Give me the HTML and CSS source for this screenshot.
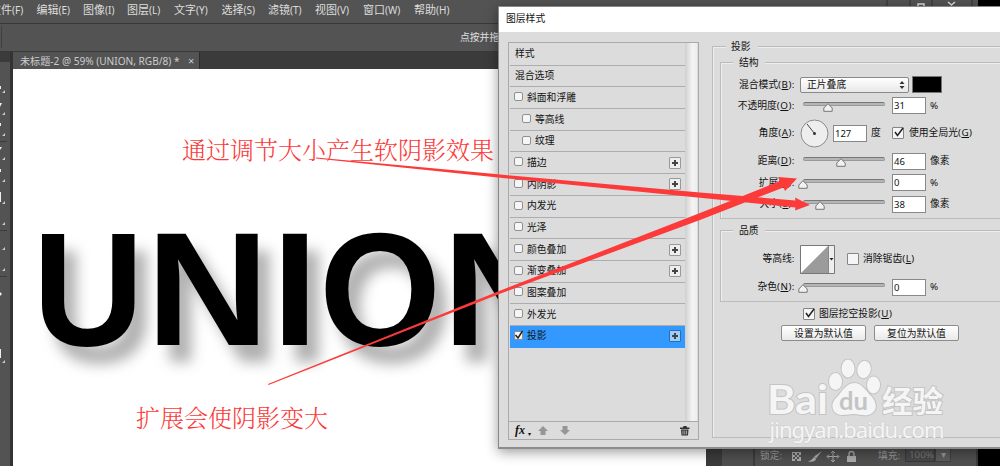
FILE: index.html
```html
<!DOCTYPE html>
<html lang="zh-CN">
<head>
<meta charset="utf-8">
<title>图层样式</title>
<link rel="stylesheet" href="styles.css">
</head>
<body>
<div class="app">
  <nav class="menubar">
    <span class="m0">文件<i>(F)</i></span><span class="m1">编辑<i>(E)</i></span><span class="m2">图像<i>(I)</i></span><span class="m3">图层<i>(L)</i></span><span class="m4">文字<i>(Y)</i></span><span class="m5">选择<i>(S)</i></span><span class="m6">滤镜<i>(T)</i></span><span class="m7">视图<i>(V)</i></span><span class="m8">窗口<i>(W)</i></span><span class="m9">帮助<i>(H)</i></span>
    <svg class="winbtns" width="115" height="23" viewBox="885 0 115 23"><path d="M887 0V7M910 0V7M932 0V7M972 0V7" stroke="#333"/><path d="M918 7V4H924V7M948 2L955 8M955 2L948 8" fill="none" stroke="#ddd" stroke-width="1.5"/><path d="M978 0H1000V7H978Z" fill="#000"/></svg>
  </nav>
  <div class="options"><span>点按并拖</span></div>
  <div class="work">
    <aside class="tools">
      <svg width="10" height="414" viewBox="0 52 10 414">
        <path d="M0 52H10V62H0Z" fill="#3b3b3b"/>
        <path d="M0 141.500H7M0 230.500H7M0 276.500H7" stroke="#3b3b3b"/>
        <path d="M5 93l-3 0 3-3zM5 115l-3 0 3-3zM5 136l-3 0 3-3zM5 160l-3 0 3-3zM5 182l-3 0 3-3zM5 204l-3 0 3-3zM5 225l-3 0 3-3zM5 250l-3 0 3-3zM5 271l-3 0 3-3zM5 363l-3 0 3-3z" fill="#ccc"/>
        <path d="M0 86h1v3H0zM0 103h2l-2 4zM0 123h1v3H0zM0 147h2l-2 3zM0 169h1v3H0zM0 192h1v10H0zM0 292l2 2-2 2zM0 349h1v9H0z" fill="#eee"/>
      </svg>
    </aside>
    <main class="doc">
      <div class="tabs"><div class="tab"><span>未标题-2 @ 59% (UNION, RGB/8) *</span><b>×</b></div></div>
      <div class="canvas">
        <svg width="693" height="397" viewBox="13 69 693 397">
          <g class="union">
            <text transform="translate(32.700 345) scale(.950 1)">U</text>
            <text transform="translate(146.300 345) scale(1.050 1)">N</text>
            <text transform="translate(272 345) scale(1.020 1)">I</text>
            <text transform="translate(319.300 345) scale(.965 1)">O</text>
            <text transform="translate(442.500 345) scale(1.050 1)">N</text>
          </g>
        </svg>
      </div>
    </main>
    <aside class="dock">
      <div class="strip"></div><div class="icons"></div>
      <div class="layers">
        <span>锁定:</span>
        <svg width="66" height="12" viewBox="791 449 66 12"><path d="M792 451h9v9h-9z" fill="#aaa"/><path d="M793 452h2v2h-2zM797 452h2v2h-2zM795 454h2v2h-2zM799 454h2v2h-2zM793 456h2v2h-2zM797 456h2v2h-2zM795 458h2v2h-2z" fill="#555"/><path d="M822 450l-8 5.500 2 2zM814 456q-2 3.500-6 4.500 7 1 8-2.500z" fill="#aaa"/><path d="M833 450v11M827.500 455.500h11M831 452l2-2 2 2M831 459l2 2 2-2M829 453.500l-2 2 2 2M837 453.500l2 2-2 2" fill="none" stroke="#aaa"/><path d="M847 455h9v6h-9z" fill="#aaa"/><path d="M849 455v-2a2.500 2.500 0 0 1 5 0v2" fill="none" stroke="#aaa" stroke-width="1.300"/></svg>
        <span class="fill">填充:</span><span class="pct">100%</span><span class="drop">▾</span>
      </div>
      <div class="edge"></div>
    </aside>
  </div>

  <section class="dialog">
    <header>图层样式</header>
    <div class="body">
      <div class="panel">
        <div class="rows">
          <ul class="list">
            <li>样式</li>
            <li>混合选项</li>
            <li><i class="cb"></i>斜面和浮雕</li>
            <li class="sub"><i class="cb"></i>等高线</li>
            <li class="sub"><i class="cb"></i>纹理</li>
            <li><i class="cb"></i>描边<em></em></li>
            <li><i class="cb"></i>内阴影<em></em></li>
            <li><i class="cb"></i>内发光</li>
            <li><i class="cb"></i>光泽</li>
            <li><i class="cb"></i>颜色叠加<em></em></li>
            <li><i class="cb"></i>渐变叠加<em></em></li>
            <li><i class="cb"></i>图案叠加</li>
            <li><i class="cb"></i>外发光</li>
            <li class="on"><i class="cb"><svg viewBox="0 0 9 9"><path d="M1.500 4L4 7 8.500 0"/></svg></i>投影<em></em></li>
          </ul>
          <div class="scroll"></div>
        </div>
        <footer>
          <span class="fx">fx</span><span class="dot">▾</span>
          <svg width="34" height="10" viewBox="0 0 34 10"><path d="M5 0L10 5H7.500V9H2.500V5H0ZM24.500 0H29.500V4H32L27 9 22 4H24.500Z" fill="#969696"/></svg>
          <svg class="trash" width="10" height="10" viewBox="0 0 10 10"><path d="M0 1.500H3L3.500 0H6.500L7 1.500H9.500V3H0ZM1 3.500H8.500L8 9.500H1.500Z" fill="#333"/><path d="M3 4.500V8.500M4.800 4.500V8.500M6.600 4.500V8.500" stroke="#ddd" stroke-width=".7"/></svg>
        </footer>
      </div>

      <div class="settings">
        <h2>投影</h2>
        <div class="group structure">
          <h3>结构</h3>
          <div class="row r1"><label>混合模式<s>(<u>B</u>):</s></label><div class="select"><span>正片叠底</span><svg width="6" height="8" viewBox="0 0 6 8"><path d="M3 0L5.500 3H.5ZM3 8L.5 5H5.500Z" fill="#333"/></svg></div><div class="swatch"></div></div>
          <div class="row r2"><label>不透明度<s>(<u>O</u>):</s></label><div class="slider"><svg style="margin-left:19px" viewBox="0 0 10 9"><path d="M5 .7L9.200 5V8.300H.8V5Z"/></svg></div><div class="field">31</div><span>%</span></div>
          <div class="row r3"><label>角度<s>(<u>A</u>):</s></label><svg class="dial" width="29" height="29" viewBox="0 0 29 29"><circle cx="14.500" cy="14.500" r="13.500" fill="#eee" stroke="#8b8b8b"/><path d="M7 5L14.500 14.500" stroke="#444"/><circle cx="14.500" cy="14.500" r="1.500" fill="#333"/></svg><div class="field angle">127</div><span class="deg">度</span><i class="check"><svg viewBox="0 0 11 11"><path d="M2 5L4.500 8.500 10 1"/></svg></i><span class="global">使用全局光<s>(<u>G</u>)</s></span></div>
          <div class="row r4"><label>距离<s>(<u>D</u>):</s></label><div class="slider"><svg style="margin-left:32px" viewBox="0 0 10 9"><path d="M5 .7L9.200 5V8.300H.8V5Z"/></svg></div><div class="field">46</div><span>像素</span></div>
          <div class="row r5"><label>扩展<s>(<u>R</u>):</s></label><div class="slider"><svg style="margin-left:-6px" viewBox="0 0 10 9"><path d="M5 .7L9.200 5V8.300H.8V5Z"/></svg></div><div class="field">0</div><span>%</span></div>
          <div class="row r6"><label>大小<s>(<u>S</u>):</s></label><div class="slider"><svg style="margin-left:11px" viewBox="0 0 10 9"><path d="M5 .7L9.200 5V8.300H.8V5Z"/></svg></div><div class="field">38</div><span>像素</span></div>
        </div>
        <div class="group quality">
          <h3>品质</h3>
          <div class="row q1"><label>等高线<s>:</s></label><svg class="contour" width="35" height="29" viewBox="0 0 35 29"><path d="M.5.500H34.500V28.500H.5Z" fill="#fff" stroke="#777"/><path d="M1 28L28 1V28Z" fill="#9b9b9b"/><path d="M28.500 1V28" stroke="#888"/><path d="M29 1H34V28H29Z" fill="#eee"/><path d="M29.500 13H33.500L31.500 15.500Z" fill="#222"/></svg><i class="check off"></i><span class="aa">消除锯齿<s>(<u>L</u>)</s></span></div>
          <div class="row q2"><label>杂色<s>(<u>N</u>):</s></label><div class="slider"><svg style="margin-left:-6px" viewBox="0 0 10 9"><path d="M5 .7L9.200 5V8.300H.8V5Z"/></svg></div><div class="field">0</div><span>%</span></div>
        </div>
        <div class="knock"><i class="check"><svg viewBox="0 0 11 11"><path d="M2 5L4.500 8.500 10 1"/></svg></i><span>图层挖空投影<s>(<u>U</u>)</s></span></div>
        <div class="buttons"><button>设置为默认值</button><button>复位为默认值</button></div>
      </div>
    </div>
  </section>

  <svg class="overlay" width="1000" height="466" viewBox="0 0 1000 466">
    <g class="mark">
      <text class="bai" x="767" y="414" textLength="61" lengthAdjust="spacingAndGlyphs">Bai</text>
      <g><ellipse cx="835.500" cy="381.500" rx="6.500" ry="8.500"/><ellipse cx="848" cy="368.500" rx="6.500" ry="9"/><ellipse cx="864" cy="369.500" rx="6.700" ry="8.700" transform="rotate(12 864 369.500)"/><ellipse cx="873.500" cy="385" rx="6.500" ry="8.500"/><path d="M854 383C846 383 842 392 836 398C829 405 833 415 842 415C847 415 850 414 854 414C859 414 863 416 868 415C877 413 878 404 872 397C866 391 862 383 854 383Z"/></g>
      <text class="du" x="839" y="410" textLength="29" lengthAdjust="spacingAndGlyphs">du</text>
      <text class="jy" x="882" y="411.500" textLength="61" lengthAdjust="spacingAndGlyphs">经验</text>
      <text class="url" x="769.500" y="437.500" textLength="175">jingyan.baidu.com</text>
    </g>
    <g class="notes">
      <text x="182" y="159">通过调节大小产生软阴影效果</text>
      <text x="136" y="427">扩展会使阴影变大</text>
    </g>
    <path d="M316 157.500L498 174.300 700 192.500 795.500 200.500 795 197.500 810 205 795 210.500 795.500 207.500 700 197.700 498 177.500 316 158.500ZM268 384L498 291.500 700 213 780 181 778 177 797 178.500 785 191 783.500 187.500 700 220 498 294.500 268.500 385Z" fill="#fd3a3a"/>
  </svg>
</div>
</body>
</html>
```
FILE: styles.css
```css
* { box-sizing: border-box; }
body { margin: 0; background: #fff; font: 9.8px/1 "Noto Sans", "Noto Sans CJK SC", sans-serif; color: #111; }
i, em { font-style: normal; }
s { text-decoration: none; letter-spacing: .5px; }
ul, h2, h3 { margin: 0; padding: 0; font-weight: normal; list-style: none; font-size: inherit; }
svg { display: block; flex: none; }
.app { position: relative; width: 1000px; height: 466px; overflow: hidden; display: flex; flex-direction: column; }

.menubar { height: 23px; background: #535353; color: #ddd; display: flex; font-size: 11px; line-height: 20px; flex: none; overflow: hidden; }
.menubar span { flex: none; white-space: nowrap; }
.menubar i { font-size: 10px; }
.m0 { width: 46.5px; margin-left: -10px; }
.m1 { width: 46.5px; }
.m2 { width: 44px; }
.m3 { width: 47px; }
.m4 { width: 47.5px; }
.m5 { width: 46.5px; }
.m6 { width: 47px; }
.m7 { width: 48px; }
.m8 { width: 51px; }
.m9 { width: 40px; }
.winbtns { margin-left: auto; }
.options { height: 29px; flex: none; background: #535353; border-top: 1px solid #383838; border-bottom: 1px solid #3a3a3a; padding-left: 1px; color: #e0e0e0; line-height: 27px; }
.options span { display: block; padding-left: 458px; border-left: 1px solid #404040; height: 22px; margin-top: 2px; line-height: 24px; }
.work { flex: 1; display: flex; min-height: 0; }
.tools { width: 13px; background: #535353; border-right: 3px solid #333; flex: none; }
.doc { width: 693px; flex: none; display: flex; flex-direction: column; }
.tabs { height: 17px; background: #3b3b3b; flex: none; }
.tab { width: 187px; height: 17px; background: #535353; color: #ccc; display: flex; align-items: center; padding-left: 7px; font-size: 10.1px; white-space: nowrap; border-right: 1px solid #2d2d2d; }
.tab span { width: 168px; padding-top: 1px; }
.tab b { font-size: 11px; font-weight: normal; }
.canvas { flex: 1; background: #fff; }
.union text { font: bold 162px "Liberation Sans", sans-serif; fill: #000; }
.union { filter: drop-shadow(12px 17px 7px rgba(0, 0, 0, .31)); }

.dock { flex: 1; display: flex; background: #3b3b3b; }
.strip { width: 16px; }
.icons { width: 31px; background: #4f4f4f; }
.layers { width: 221px; margin-left: 2px; padding: 0 2px 4px 5px; background: #4f4f4f; color: #999; display: flex; align-items: flex-end; }
.layers span { line-height: 12px; }
.layers > span:first-child { width: 31px; }
.layers .fill { margin-left: 21px; width: 27px; }
.layers .pct { width: 30px; padding-left: 3px; color: #777; background: #484848; border: 1px solid #383838; line-height: 13px; }
.layers .drop { width: 16px; text-align: center; background: #5c5c5c; border: 1px solid #404040; line-height: 13px; }
.edge { flex: 1; margin-left: 2px; background: #000; }

.dialog { position: absolute; left: 498px; top: 6px; width: 520px; height: 443px; border: 1px solid #888; border-bottom: 2px solid #8c8c8c; background: #dcdcdc; box-shadow: 0 3px 12px rgba(0, 0, 0, .4); display: flex; flex-direction: column; }
.dialog header { height: 25px; background: #fff; padding-left: 7px; line-height: 24px; flex: none; }
.body { flex: 1; display: flex; padding: 10px 0 9px 9px; }
.panel { width: 191px; height: 398px; border: 1px solid #aaa; display: flex; flex-direction: column; flex: none; }
.rows { flex: 1; display: flex; padding: 0 1px; border-bottom: 1px solid #aaa; }
.list { width: 176px; padding-top: 1px; }
.list li { height: 21.7px; display: flex; align-items: center; padding: 0 4px 0 5px; border-bottom: 1px solid #adadad; }
.list .sub { padding-left: 13px; }
.cb { width: 9px; height: 9px; border: 1px solid #8f8f8f; border-radius: 2px; background: #f6f6f6; margin: -2px 4px 0 0; flex: none; }
.list li > .cb { margin-left: -1px; }
.cb svg { width: 9px; height: 9px; margin: -1px 0 0 -1px; overflow: visible; }
.cb path, .check path { fill: none; stroke: #222; stroke-width: 1.5; }
.list em { width: 12px; height: 12px; margin-left: auto; border: 1px solid #999; border-radius: 1px; background: linear-gradient(#444, #444) center / 6px 2px no-repeat, linear-gradient(#444, #444) center / 2px 6px no-repeat, #eee; }
.list .on { background: #3399ff; border-color: #3399ff; }
.list .on em { background-color: #9accff; border-color: #2f6da8; }
.scroll { width: 12px; background: linear-gradient(90deg, #cfcfcf, #f3f3f3 60%, #eee); }
.panel footer { height: 17px; display: flex; align-items: center; padding: 0 8px 0 6px; }
.fx { font: italic bold 12px "Liberation Serif", serif; width: 13px; }
.dot { font-size: 6px; width: 10px; padding-top: 7px; }
.trash { margin-left: auto; }

.settings { flex: 1; margin-left: 13px; margin-top: 4px; height: 392px; border: 1px solid #bbb; box-shadow: inset 1px 1px #eee; padding-left: 7px; }
.settings h2 { width: 32px; padding: 0 5px; margin: -6px 0 0 6px; height: 16px; line-height: 11px; background: #dcdcdc; white-space: nowrap; }
.group { border: 1px solid #bbb; box-shadow: inset 1px 1px #eee; width: 310px; }
.structure { height: 157px; margin-top: 5px; }
.quality { height: 72px; margin-top: 11px; }
.group h3 { width: 32px; height: 11px; margin: -6px 0 0 12px; padding: 0 6px; line-height: 11px; background: #dcdcdc; white-space: nowrap; }
.row { display: flex; align-items: center; }
.row label { width: 74px; margin-right: 5px; text-align: right; white-space: nowrap; flex: none; }
.r1 { height: 21px; margin-top: 6px; }
.r2 { height: 21px; }
.r3 { height: 34px; }
.r4 { height: 22px; }
.r5 { height: 21px; }
.r6 { height: 22px; }
.q1 { height: 32px; margin-top: 7px; }
.q2 { height: 24px; }
.select { width: 109px; height: 16px; border: 1px solid #888; border-radius: 2px; background: linear-gradient(#fff, #e8e8e8); display: flex; align-items: center; justify-content: space-between; padding: 0 3px 0 6px; }
.swatch { width: 30px; height: 17px; background: #000; border: 1px solid #777; margin-left: 3px; }
.slider { width: 82px; height: 4px; margin: -4px 7px 0 3px; border: 1px solid #999; border-top-color: #777; background: #b5b5b5; border-radius: 2px; flex: none; }
.slider svg { width: 10px; height: 9px; }
.slider path { fill: #f1f1f1; stroke: #777; }
.field { width: 34px; height: 17px; border: 1px solid #888; background: #fff; padding-left: 1px; line-height: 15px; font-size: 9.5px; margin-right: 4px; flex: none; }
.angle { margin-left: 4px; }
.deg { width: 21px; }
.check { width: 12px; height: 12px; border: 1px solid #858585; border-radius: 1px; background: #f5f5f5; flex: none; }
.check svg { width: 11px; height: 11px; margin: -1px 0 0; overflow: visible; }
.global { margin-left: 5px; }
.off { margin-left: 12px; }
.aa { margin-left: 4px; }
.knock { display: flex; align-items: center; padding-left: 83px; margin-top: 6px; height: 12px; }
.knock span { margin-left: 4px; }
.buttons { display: flex; gap: 8px; margin-top: 5px; padding-left: 61px; }
.buttons button { width: 85px; height: 16px; padding: 0; border: 1px solid #8c8c8c; border-radius: 2px; background: linear-gradient(#fff, #e9e9e9); font: inherit; line-height: 13px; color: #111; }

.overlay { position: absolute; left: 0; top: 0; pointer-events: none; }
.notes text { font: 300 24px "Noto Serif CJK SC", "Noto Sans CJK SC", serif; fill: #fd3a3a; }
.mark { fill: #f5f5f5; stroke: #c4c4c4; stroke-width: 2px; paint-order: stroke; }
.bai { font: bold 40px Lato, sans-serif; }
.mark .du { font: bold 25px Lato, sans-serif; fill: #c4c4c4; stroke: none; }
.jy { font: bold 30px "Noto Sans CJK SC", sans-serif; }
.mark .url { font: 22px "Noto Sans", sans-serif; stroke-width: 1px; stroke: #ccc; }
```
